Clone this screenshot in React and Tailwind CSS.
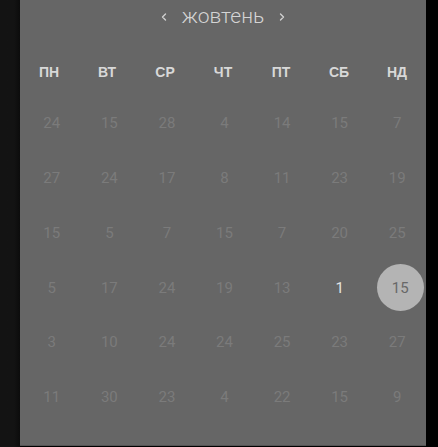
import React from 'react';

const days = ['ПН', 'ВТ', 'СР', 'ЧТ', 'ПТ', 'СБ', 'НД'];

const rows = [
  [24, 15, 28, 4, 14, 15, 7],
  [27, 24, 17, 8, 11, 23, 19],
  [15, 5, 7, 15, 7, 20, 25],
  [5, 17, 24, 19, 13, 1, 15],
  [3, 10, 24, 24, 25, 23, 27],
  [11, 30, 23, 4, 22, 15, 9],
];

const Chevron = ({ dir }) => (
  <svg width="8" height="10" viewBox="0 0 8 10" fill="none" stroke="#d0d0d0" strokeWidth="1.4" strokeLinecap="round" strokeLinejoin="round">
    {dir === 'left' ? <path d="M5.5 2 2.5 5l3 3" /> : <path d="M2.5 2 5.5 5l-3 3" />}
  </svg>
);

export default function App() {
  return (
    <div className="flex h-[447px] w-full bg-black font-['Roboto',sans-serif]">
      {/* dark side strip */}
      <div className="w-[20px] shrink-0 bg-gradient-to-r from-[#131313] from-70% to-[#0c0c0c]" />

      {/* calendar panel */}
      <div className="h-[446px] w-[406px] shrink-0 border-b border-[#555] bg-[#666]">
        <div className="flex h-[34px] items-center justify-center gap-[14px]">
          <Chevron dir="left" />
          <span className="text-[21px] font-light text-[#d4d4d4] pb-[1px]">жовтень</span>
          <Chevron dir="right" />
        </div>

        <div className="grid h-[62px] grid-cols-7 pt-[14px]">
          {days.map((d) => (
            <div key={d} className="flex items-center justify-center font-['Liberation_Sans',sans-serif] text-[14px] font-bold text-[#d8d8d8]">
              {d}
            </div>
          ))}
        </div>

        <div className="grid grid-cols-7 pl-[3px]">
          {rows.map((row, r) =>
            row.map((n, c) => {
              const selected = r === 3 && c === 6;
              const active = r === 3 && c === 5;
              return (
                <div key={`${r}-${c}`} className="flex h-[54.8px] items-center justify-center">
                  {selected ? (
                    <div className="ml-[6px] flex h-[47px] w-[47px] items-center justify-center rounded-full bg-[#b4b4b4] text-[15px] text-[#686868]">
                      {n}
                    </div>
                  ) : (
                    <span className={`text-[15px] ${active ? 'text-[#e2e2e2]' : 'text-[#7b7b7b]'}`}>{n}</span>
                  )}
                </div>
              );
            })
          )}
        </div>
      </div>

      <div className="flex-1 bg-black" />
    </div>
  );
}
